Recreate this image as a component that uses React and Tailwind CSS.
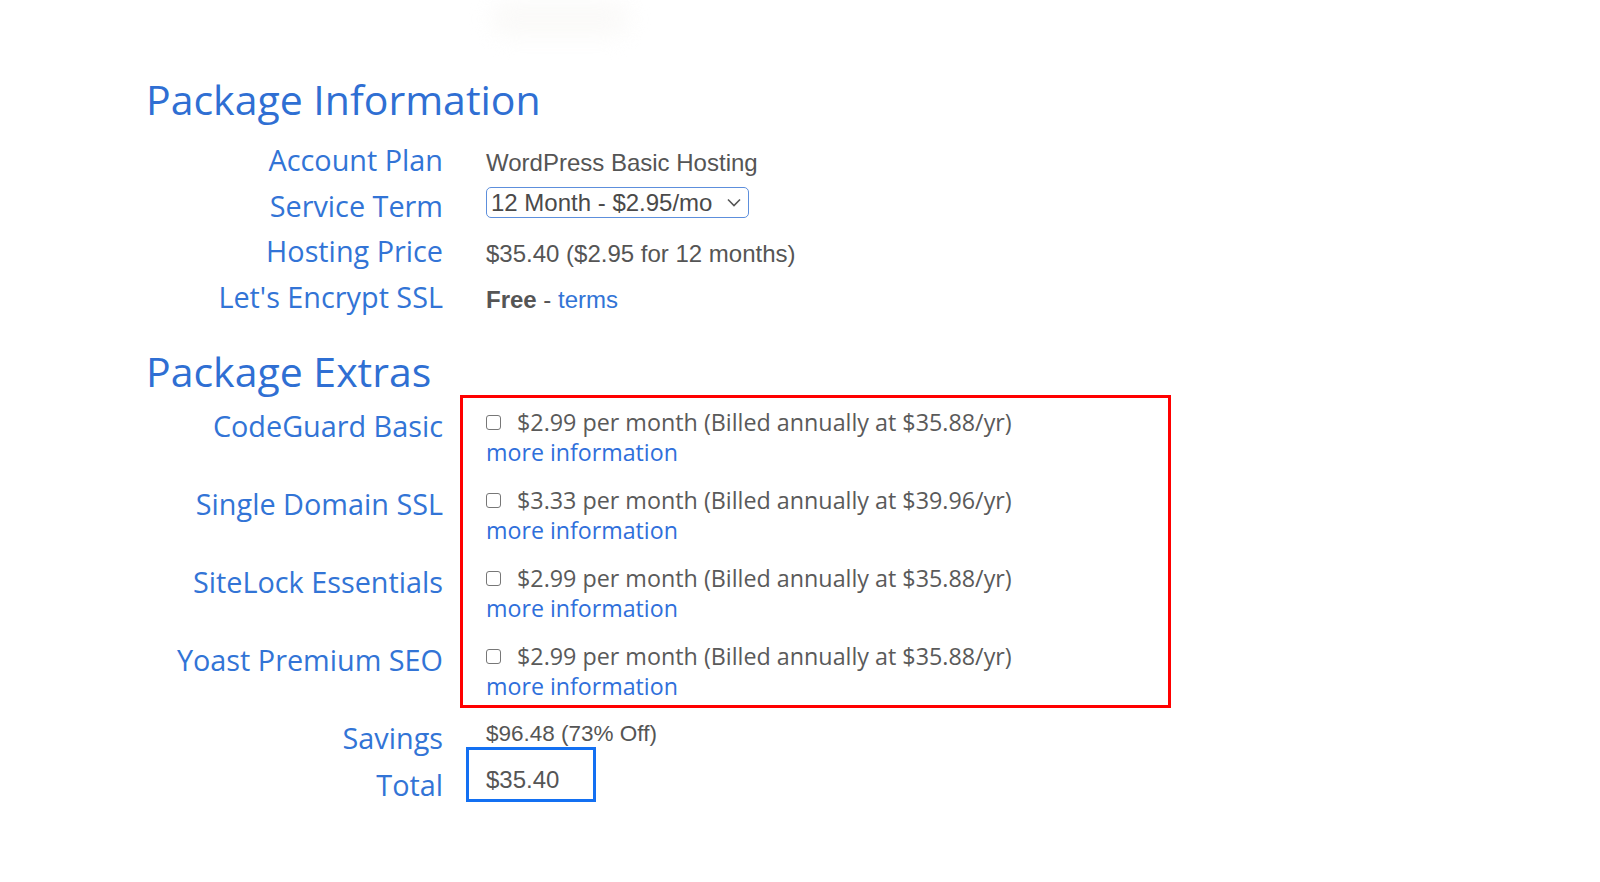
import React from "react";

const labelCls = "text-right text-[#3274d6] text-[28.8px] leading-[36px]";
const valueFont = { fontFamily: '"Liberation Sans", Arial, sans-serif' };

const infoRows = [
    { label: "Account Plan", value: "WordPress Basic Hosting" },
    { label: "Service Term", value: "select" },
    { label: "Hosting Price", value: "$35.40 ($2.95 for 12 months)" },
    { label: "Let's Encrypt SSL", value: "ssl" },
];

const extras = [
    { label: "CodeGuard Basic", price: "$2.99 per month (Billed annually at $35.88/yr)" },
    { label: "Single Domain SSL", price: "$3.33 per month (Billed annually at $39.96/yr)" },
    { label: "SiteLock Essentials", price: "$2.99 per month (Billed annually at $35.88/yr)" },
    { label: "Yoast Premium SEO", price: "$2.99 per month (Billed annually at $35.88/yr)" },
];

function TermSelect() {
    return (
        <div
            className="mt-[4px] flex h-[31px] w-[263px] items-center justify-between rounded-[5px] border border-[#5d8fdc] pl-[4px] pr-[7px] text-[24px] text-[#4a4a4a]"
            style={valueFont}
        >
            <span className="leading-[29px]">12 Month - $2.95/mo</span>
            <svg width="14" height="9" viewBox="0 0 14 9" fill="none">
                <path d="M1 1.5 L7 7.5 L13 1.5" stroke="#555" strokeWidth="1.6" />
            </svg>
        </div>
    );
}

function InfoValue({ value }) {
    if (value === "select") return <TermSelect />;
    if (value === "ssl") {
        return (
            <span className="text-[24px] text-[#555]" style={valueFont}>
                <span className="font-bold">Free</span> - <span className="text-[#3274d6]">terms</span>
            </span>
        );
    }
    return (
        <span className="text-[24px] text-[#555]" style={valueFont}>
            {value}
        </span>
    );
}

export default function App() {
    return (
        <div
            className="min-h-[882px] w-[1600px] bg-white"
            style={{ fontFamily: '"Open Sans", "Noto Sans", sans-serif' }}
        >
            {/* faded image fragment cut off at the top */}
            <div className="h-[75px] pl-[490px]">
                <div className="h-[38px] w-[140px] rounded-full bg-[#f8f7f5] opacity-60 blur-[10px]" />
            </div>

            <div className="pl-[146px]">
                <h2 className="text-[41px] leading-[48px] text-[#2f6fd3]">Package Information</h2>

                <div className="mt-[14px] flex flex-col">
                    {infoRows.map((row) => (
                        <div
                            key={row.label}
                            className={`flex h-[45.5px] gap-[43px] ${row.value === "select" ? "items-start" : "items-baseline"}`}
                        >
                            <div className={`w-[297px] shrink-0 ${labelCls} leading-[45px]`}>{row.label}</div>
                            <InfoValue value={row.value} />
                        </div>
                    ))}
                </div>

                <h2 className="mt-[29px] text-[41px] leading-[47px] text-[#2f6fd3]">Package Extras</h2>

                <div className="flex items-start">
                    <div className="w-[297px] shrink-0 pt-[13px]">
                        {extras.map((e) => (
                            <div key={e.label} className={`h-[78px] ${labelCls}`}>
                                {e.label}
                            </div>
                        ))}
                    </div>

                    <div className="ml-[17px] w-[711px] border-[3px] border-[#ff0000] pb-[4px] pl-[23px] pt-[9px]">
                        {extras.map((e, i) => (
                            <div key={i} className={i < extras.length - 1 ? "h-[78px]" : ""}>
                                <div className="flex items-center gap-[16px] text-[23.3px] leading-[30px] text-[#5a5a5a]">
                                    <span className="h-[15px] w-[15px] shrink-0 rounded-[3px] border-[1.5px] border-[#777] bg-white" />
                                    <span>{e.price}</span>
                                </div>
                                <div className="text-[23.2px] leading-[30px] text-[#2f6fdb]">more information</div>
                            </div>
                        ))}
                    </div>
                </div>

                <div className="flex h-[27px] items-start gap-[43px]">
                    <div className={`w-[297px] shrink-0 ${labelCls}`}>Savings</div>
                    <span className="text-[22.5px] leading-[27px] text-[#555]" style={valueFont}>
                        $96.48 (73% Off)
                    </span>
                </div>

                <div className="flex items-start">
                    <div className={`mt-[20px] w-[297px] shrink-0 ${labelCls}`}>Total</div>
                    <div
                        className="ml-[23px] h-[55px] w-[130px] border-[3px] border-[#1370f2] pl-[17px] pt-[15px] text-[24px] leading-[29px] text-[#555]"
                        style={valueFont}
                    >
                        $35.40
                    </div>
                </div>
            </div>
        </div>
    );
}
